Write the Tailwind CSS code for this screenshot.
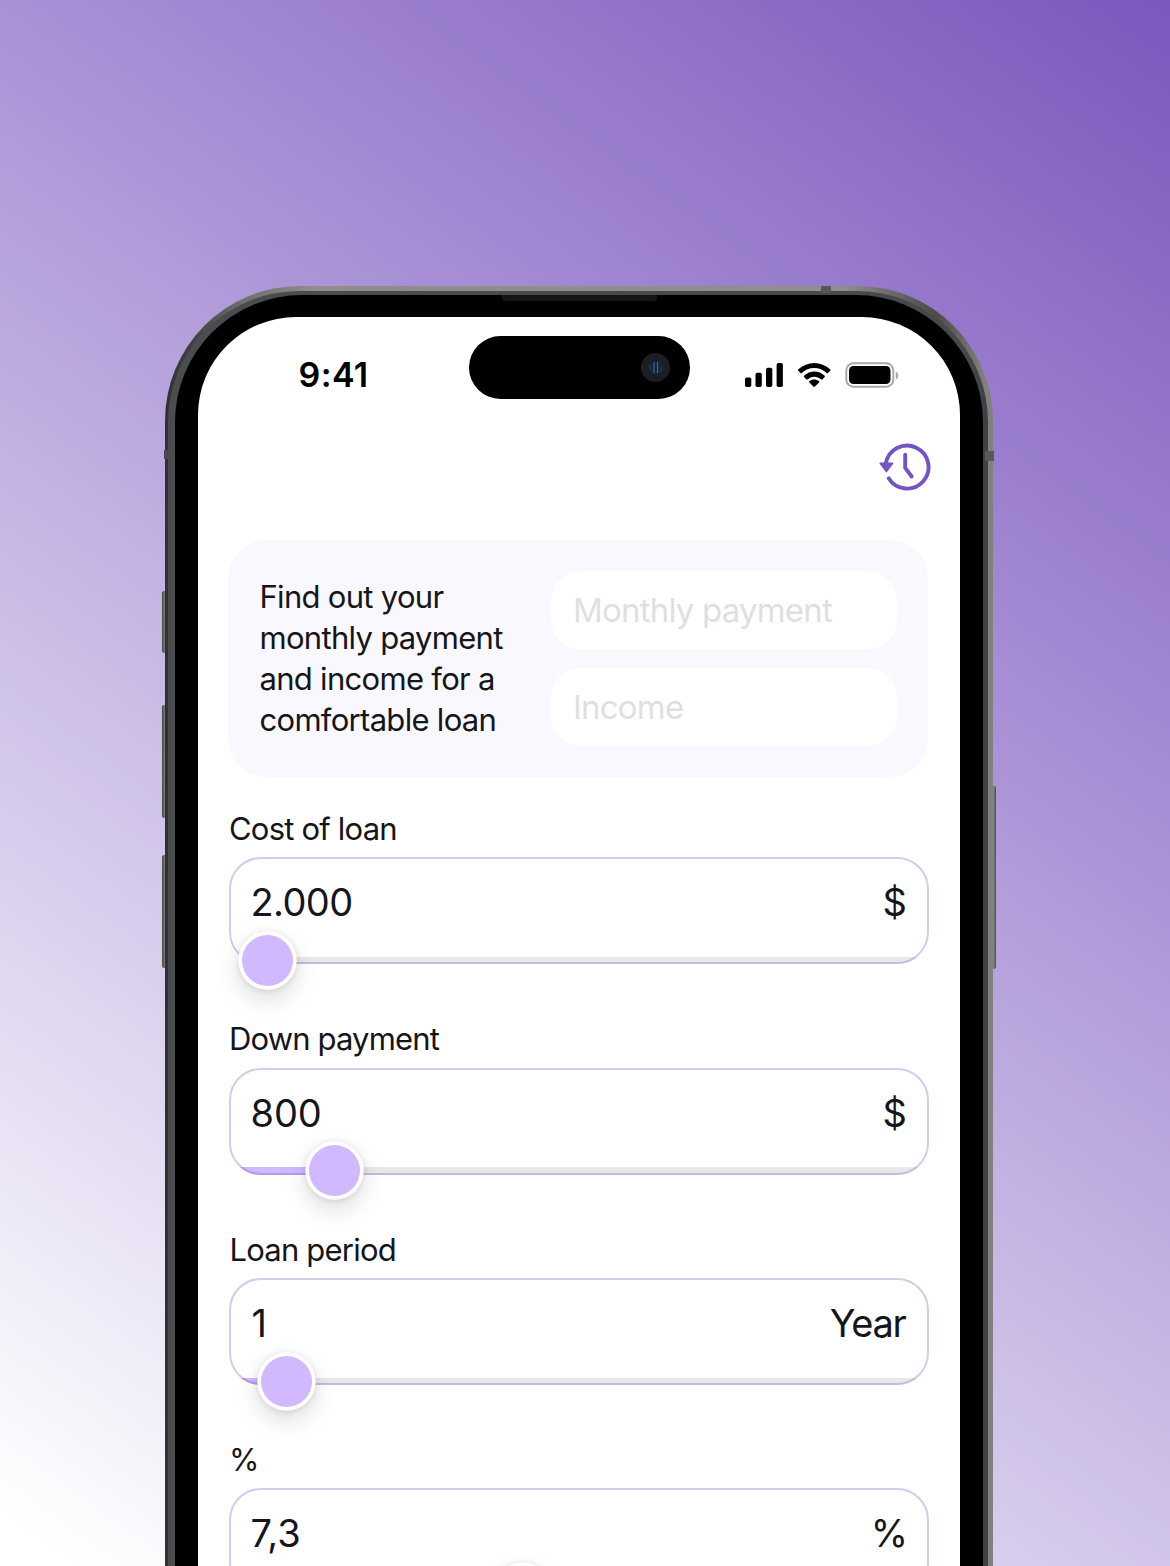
<!DOCTYPE html>
<html lang="en">
<head>
<meta charset="utf-8">
<title>Loan calculator</title>
<script src="https://cdn.jsdelivr.net/npm/@tailwindcss/browser@4"></script>
</head>
<body class="w-[1170px] h-[1566px] overflow-hidden font-['Inter',sans-serif] text-[#15151a]">
<main class="w-[1170px] h-[1566px] overflow-hidden pl-[165px] pt-[286px] bg-[linear-gradient(36deg,#ffffff_2%,#a68dd4_67%,#7b58bd_100%)]">
  <!-- phone -->
  <div class="relative w-[828px] h-[1400px] rounded-t-[135px] pt-[5px] pl-[3px] pr-[5px] bg-[linear-gradient(90deg,#2f3032_0%,#444547_4%,#6d6d6c_9%,#8e8e8c_18%,#8e8e8c_82%,#4b4b4c_93%,#808080_99%)]">
    <i class="absolute -left-[3px] top-[305px] w-[3px] h-[62px] rounded-l-[2px] bg-[linear-gradient(90deg,#454846,#7b807c)]"></i>
    <i class="absolute -left-[3px] top-[419px] w-[3px] h-[113px] rounded-l-[2px] bg-[linear-gradient(90deg,#454846,#7b807c)]"></i>
    <i class="absolute -left-[3px] top-[569px] w-[3px] h-[113px] rounded-l-[2px] bg-[linear-gradient(90deg,#454846,#7b807c)]"></i>
    <i class="absolute -right-[3px] top-[500px] w-[3px] h-[183px] rounded-r-[2px] bg-[linear-gradient(90deg,#8b8f8b,#4a4c4b)]"></i>
    <i class="absolute left-[656px] top-0 z-10 w-[10px] h-[7px] bg-[#565657]"></i>
    <i class="absolute -left-px top-[164px] z-10 w-[8px] h-[9px] bg-[#48494b]"></i>
    <i class="absolute -right-px top-[165px] z-10 w-[9px] h-[10px] bg-[#58585a]"></i>
    <div class="h-full rounded-t-[131px] pt-[4px] pl-[7px] pr-[5px] bg-[linear-gradient(90deg,#4b4c4e_0%,#47484a_98%,#3f3f42_100%)]">
      <div class="relative h-full rounded-t-[127px] bg-black pt-[22px] pl-[23px] pr-[23px]">
        <i class="absolute left-[327px] top-0 w-[155px] h-[6px] rounded-b-[3px] bg-[#141515]"></i>
        <!-- screen -->
        <div class="relative h-full rounded-t-[98px] bg-white pl-[30px] w-[761.500px]">
          <div class="absolute left-[270.5px] top-[19px] w-[221.5px] h-[63px] rounded-full bg-black">
            <svg class="absolute left-[172.500px] top-[17px]" width="29" height="29" viewBox="0 0 29 29" fill="none">
              <circle cx="14.5" cy="14.5" r="14.5" fill="#1d1e20"/>
              <circle cx="14.5" cy="14.7" r="7" fill="#18223a"/>
              <path d="M13 9v11M16.500 9v11" stroke="#2f6aa0" stroke-width="1.200"/>
              <path d="M9 11.500q-1 3 1 6M19 19q2-2 2-5" stroke="#24427a"/>
            </svg>
          </div>
          <div class="flex justify-between pt-[45px] pl-[70.500px] pr-[60px] h-[126px]">
            <span class="text-[34px] leading-[26px] font-semibold tracking-[0.4px] text-black">9:41</span>
            <svg width="155" height="27" viewBox="0 0 155 27">
              <rect x="0" y="15.500" width="6.300" height="9.500" rx="1.800"/>
              <rect x="10.500" y="10.800" width="6.300" height="14.200" rx="1.800"/>
              <rect x="21" y="5.800" width="6.300" height="19.200" rx="1.800"/>
              <rect x="31.600" y="1" width="6.300" height="24" rx="1.800"/>
              <path transform="translate(52.500 0.800) scale(1.970 2.040)" d="M8.500 2.600c2.400 0 4.700.9 6.400 2.500.1.100.3.100.5 0l1.300-1.300c.1-.1.100-.3 0-.5C12.100-1 4.900-1 .3 3.300c-.1.100-.1.300 0 .5l1.300 1.300c.1.100.3.100.4 0C3.800 3.500 6.100 2.600 8.500 2.600zM8.500 6.800c1.300 0 2.600.5 3.600 1.400.1.100.3.100.5 0l1.200-1.300c.1-.1.100-.3 0-.5-3-2.800-7.500-2.800-10.500 0-.1.100-.1.400 0 .5l1.300 1.300c.1.100.3.100.5 0 .9-.9 2.200-1.400 3.400-1.400zM11 9.600c.1-.1.100-.4 0-.5-1.500-1.200-3.600-1.200-5 0-.1.100-.1.300 0 .5l2.200 2.200c.1.100.3.100.5 0L11 9.600z"/>
              <rect x="101.300" y="1.300" width="47" height="23.400" rx="7" fill="none" stroke="#a9a9a9" stroke-width="2"/>
              <rect x="104" y="4" width="41.500" height="18" rx="4.500"/>
              <path d="M150.800 9.500q2.600 1 2.600 4t-2.600 4z" fill="#a9a9a9"/>
            </svg>
          </div>
          <div class="flex h-[97px] justify-end pr-[27.500px]">
            <svg width="54" height="50" viewBox="0 0 54 50" fill="none" stroke="#7553c1" stroke-width="3.900" stroke-linecap="round" stroke-linejoin="round">
              <g transform="translate(0.700 -0.200)">
              <path d="M10 35.500A21.500 21.500 0 1 0 7.100 21"/>
              <path d="M1.500 20.500h12.400L7.700 28.800z" fill="#7553c1" stroke-width="1.500"/>
              <path d="M26.500 12V25l6.500 8.700"/>
              </g>
            </svg>
          </div>
          <section class="flex w-[700px] h-[237px] items-center justify-between rounded-[38px] bg-[#f9f8fe] pl-[31.500px] pr-[31px]">
            <p class="-mt-[2px] text-[31px] leading-[41px] whitespace-nowrap tracking-[-0.7px]">Find out your<br>monthly payment<br>and income for a<br>comfortable loan</p>
            <div class="flex flex-col gap-[19px] text-[33px] text-[#dfdfe1] tracking-[-0.8px]">
              <div class="flex h-[78px] w-[346px] items-center rounded-[30px] bg-white pl-[22px] pt-px">Monthly payment</div>
              <div class="flex h-[78px] w-[346px] items-center rounded-[30px] bg-white pl-[22px] pt-px">Income</div>
            </div>
          </section>

          <section class="ml-[0.5px] h-[210.500px] w-[700px] pt-[31px]">
            <h2 class="h-[49px] pl-[0.5px] text-[31px] leading-[41px] tracking-[-0.8px]">Cost of loan</h2>
            <div class="relative h-[107px]">
              <div class="relative flex h-full justify-between overflow-hidden rounded-[32px] px-[22px] pt-[20px] text-[38px] leading-[50px]"><span class="tracking-[-0.6px]">2.000</span><span class="tracking-[-0.5px]">$</span>
                <i class="absolute inset-x-0 bottom-0 h-[7.500px] bg-[#e8e8e8]"></i></div>
              <i class="absolute inset-0 rounded-[32px] border-2 border-[#7553c1]/30"></i>
              <i class="absolute left-[13.500px] top-[78px] size-[51px] rounded-full bg-[#d1b8ff] shadow-[0_0_0_3.75px_#ffffff,0_10px_24px_4px_rgba(0,0,0,0.13),0_1px_6px_4px_rgba(0,0,0,0.1)]"></i>
            </div>
          </section>
          <section class="ml-[0.5px] h-[210.500px] w-[700px] pt-[31px]">
            <h2 class="-mt-[0.5px] h-[49.500px] pl-[0.5px] text-[31px] leading-[41px] tracking-[-0.85px]">Down payment</h2>
            <div class="relative h-[107px]">
              <div class="relative flex h-full justify-between overflow-hidden rounded-[32px] px-[22px] pt-[20px] text-[38px] leading-[50px]"><span class="tracking-[-0.1px]">800</span><span class="tracking-[-0.5px]">$</span>
                <i class="absolute inset-x-0 bottom-0 h-[7.500px] bg-[#e8e8e8]"></i>
                <i class="absolute left-0 bottom-0 h-[7.500px] w-[106px] bg-[#d1b8ff]"></i></div>
              <i class="absolute inset-0 rounded-[32px] border-2 border-[#7553c1]/30"></i>
              <i class="absolute left-[80px] top-[77.500px] size-[51px] rounded-full bg-[#d1b8ff] shadow-[0_0_0_3.75px_#ffffff,0_10px_24px_4px_rgba(0,0,0,0.13),0_1px_6px_4px_rgba(0,0,0,0.1)]"></i>
            </div>
          </section>
          <section class="ml-[0.5px] h-[210.500px] w-[700px] pt-[31px]">
            <h2 class="h-[49px] pl-px text-[31px] leading-[41px] tracking-[-0.8px]">Loan period</h2>
            <div class="relative h-[107px]">
              <div class="relative flex h-full justify-between overflow-hidden rounded-[32px] pl-[23px] pr-[23px] pt-[20px] text-[38px] leading-[50px]"><span>1</span><span class="tracking-[-1.3px]">Year</span>
                <i class="absolute inset-x-0 bottom-0 h-[7.500px] bg-[#e8e8e8]"></i>
                <i class="absolute left-0 bottom-0 h-[7.500px] w-[57px] bg-[#d1b8ff]"></i></div>
              <i class="absolute inset-0 rounded-[32px] border-2 border-[#7553c1]/30"></i>
              <i class="absolute left-[32px] top-[78px] size-[51px] rounded-full bg-[#d1b8ff] shadow-[0_0_0_3.75px_#ffffff,0_10px_24px_4px_rgba(0,0,0,0.13),0_1px_6px_4px_rgba(0,0,0,0.1)]"></i>
            </div>
          </section>
          <section class="ml-[0.5px] -mt-[0.25px] h-[210.500px] w-[700px] pt-[31px]">
            <h2 class="h-[49px] pl-[0.5px] text-[31px] leading-[41px] tracking-[-0.3px]">%</h2>
            <div class="relative h-[107px]">
              <div class="relative flex h-full justify-between overflow-hidden rounded-[32px] pl-[22px] pr-[20.500px] pt-[20px] text-[38px] leading-[50px]"><span>7,3</span><span>%</span></div>
              <i class="absolute inset-0 rounded-[32px] border-2 border-[#7553c1]/30"></i>
              <i class="absolute left-[268.500px] top-[78px] size-[51px] rounded-full bg-[#d1b8ff] shadow-[0_0_0_3.75px_#ffffff,0_10px_24px_4px_rgba(0,0,0,0.13),0_1px_6px_4px_rgba(0,0,0,0.1)]"></i>
            </div>
          </section>
        </div>
      </div>
    </div>
  </div>
</main>
</body>
</html>
